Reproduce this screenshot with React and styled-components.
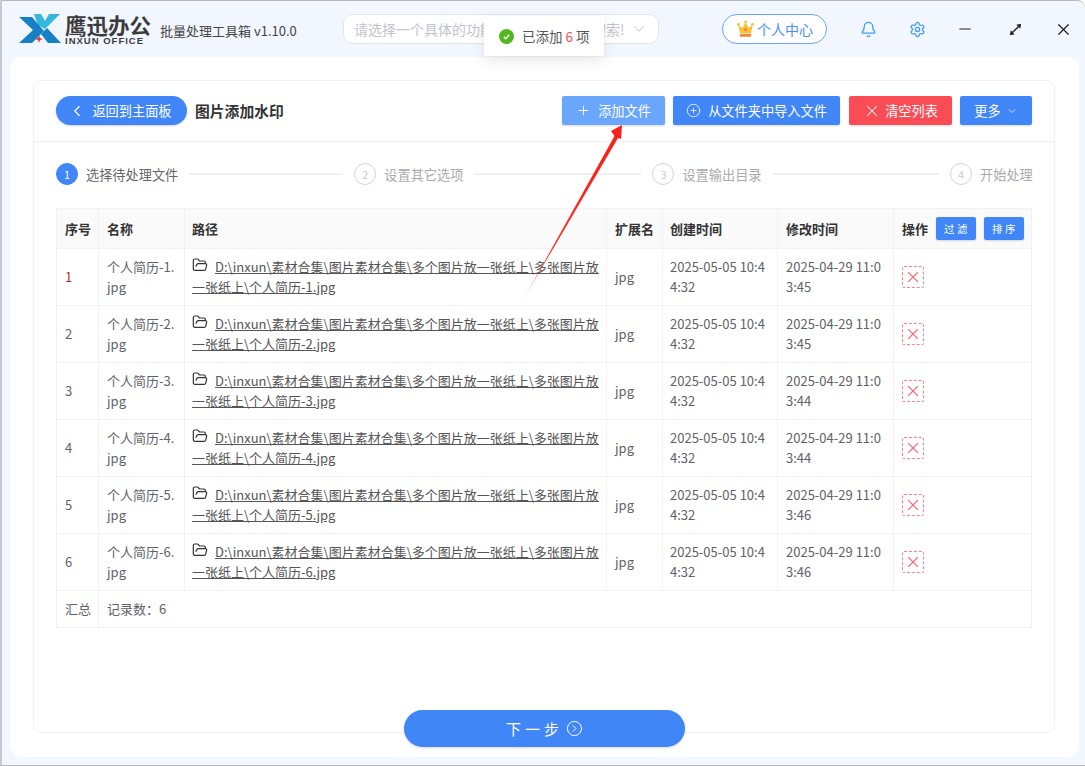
import React from 'react'
import styled, { createGlobalStyle } from 'styled-components'
import { Bell, Settings, Minus, X, Plus, ChevronLeft, ChevronDown, CirclePlus, CircleChevronRight, FolderOpen } from 'lucide-react'

const GlobalStyle = createGlobalStyle`
  html, body {
    margin: 0;
    padding: 0;
    background: #fff;
  }
  * { box-sizing: border-box; }
  body {
    font-family: "Noto Sans CJK SC", "Liberation Sans", sans-serif;
    font-size: 13px;
    color: #606266;
  }
`

const AppWindow = styled.div`
  position: relative;
  width: 1085px;
  height: 766px;
  overflow: hidden;
  background: #f2f6fe;
  border-top: 1px solid #b9b9bd;
  border-bottom: 1px solid #b9b9bd;
  border-left: 2px solid #c9c9cd;
  border-top-right-radius: 8px;
  display: flex;
  flex-direction: column;
`

const EdgeMark = styled.div`
  position: absolute;
  left: -2px;
  top: 82px;
  width: 2px;
  height: 38px;
  background: #1c4f9c;
`

const TopBar = styled.header`
  height: 56px;
  flex: none;
  display: flex;
  align-items: center;
  padding-left: 16px;
`

const Brand = styled.div`
  display: flex;
  align-items: center;
  width: 142px;
  flex: none;
`

const BrandText = styled.div`
  margin: 1px 0 0 3px;
  display: flex;
  flex-direction: column;
  color: #3b3b3d;
`

const BrandName = styled.span`
  font-size: 21.5px;
  line-height: 22px;
  font-weight: 700;
  white-space: nowrap;
`

const BrandSub = styled.span`
  font-family: "Liberation Sans", sans-serif;
  font-size: 9.5px;
  line-height: 10px;
  font-weight: 700;
  letter-spacing: 1px;
  white-space: nowrap;
`

const AppTitle = styled.span`
  width: 183px;
  flex: none;
  margin-top: 3px;
  font-size: 13px;
  color: #444;
  white-space: nowrap;
`

const SearchBox = styled.div`
  width: 316px;
  height: 30px;
  flex: none;
  background: #fff;
  border: 1px solid #e2e4e9;
  border-radius: 10px;
  display: flex;
  align-items: center;
  justify-content: space-between;
  padding: 0 10px;
  color: #c0c4cc;
  font-size: 14px;
  white-space: nowrap;
`

const VipButton = styled.button`
  margin-left: 63px;
  width: 105px;
  height: 30px;
  flex: none;
  border: 1px solid #6aa3fb;
  border-radius: 15px;
  background: #fff;
  color: #4d8ef7;
  font: inherit;
  font-size: 14px;
  display: flex;
  align-items: center;
  justify-content: center;
  gap: 2px;
  padding: 0;
`

const WinIcon = styled.span`
  width: 24px;
  height: 24px;
  flex: none;
  margin-left: ${p => p.$gap}px;
  display: flex;
  align-items: center;
  justify-content: center;
  color: ${p => p.$color || '#222'};
`

const Toast = styled.div`
  position: absolute;
  left: 482px;
  top: 15px;
  width: 120px;
  height: 40px;
  background: #fff;
  border-radius: 2px;
  box-shadow: 0 4px 14px rgba(0, 0, 0, 0.1);
  display: flex;
  align-items: center;
  padding-left: 15px;
  gap: 8px;
  font-size: 13.5px;
  color: #555;
  z-index: 5;
`

const ToastCheck = styled.span`
  width: 15px;
  height: 15px;
  border-radius: 50%;
  background: #52b81f;
  display: flex;
  align-items: center;
  justify-content: center;
`

const Count = styled.em`
  font-style: normal;
  color: #f5525c;
`

const Panel = styled.main`
  position: relative;
  flex: none;
  width: 1069px;
  height: 700px;
  margin-left: 8px;
  background: #fff;
  border-radius: 12px;
  padding: 23px 24px 24px 23px;
`

const Card = styled.section`
  height: 653px;
  border: 1px solid #f1f1f3;
  border-radius: 8px;
`

const CardHead = styled.div`
  height: 61px;
  border-bottom: 1px solid #f0f0f2;
  display: flex;
  align-items: center;
  padding: 0 22px 1px;
`

const BackButton = styled.button`
  width: 131px;
  height: 29px;
  border: 0;
  border-radius: 15px;
  background: #4086f7;
  color: #fff;
  font: inherit;
  font-size: 13.2px;
  display: flex;
  align-items: center;
  justify-content: center;
  gap: 6px;
  padding: 0 3px 0 0;
  box-shadow: 0 1px 2px rgba(0, 0, 0, 0.18);
`

const PageTitle = styled.h1`
  margin: 0 auto 0 8px;
  font-size: 14.8px;
  font-weight: 700;
  color: #333;
`

const ToolButton = styled.button`
  height: 29px;
  width: ${p => p.$w}px;
  margin-left: ${p => p.$ml ?? 8}px;
  border: 0;
  border-radius: 2px;
  background: ${p => p.$bg || '#4086f7'};
  color: #fff;
  font: inherit;
  font-size: 13.2px;
  display: flex;
  align-items: center;
  justify-content: center;
  gap: ${p => p.$gap ?? 7}px;
  padding: 0;
  box-shadow: 0 1px 2px rgba(0, 0, 0, 0.15);
`

const Steps = styled.ol`
  list-style: none;
  margin: 21px 0 0;
  padding: 0 22px;
  display: flex;
  align-items: center;
  height: 22px;
  font-size: 13.2px;
`

const Step = styled.li`
  display: flex;
  align-items: center;
  gap: 8px;
  flex: none;
  color: ${p => (p.$active ? '#666' : '#aaa')};
  white-space: nowrap;
`

const StepDot = styled.span`
  width: 22px;
  height: 22px;
  border-radius: 50%;
  font-size: 11px;
  display: flex;
  align-items: center;
  justify-content: center;
  background: ${p => (p.$active ? '#4086f7' : '#fff')};
  color: ${p => (p.$active ? '#fff' : '#ccc')};
  border: 1px solid ${p => (p.$active ? '#4086f7' : '#d4d4d4')};
`

const StepLine = styled.li`
  flex: none;
  width: ${p => p.$w}px;
  height: 2px;
  margin: 0 11px;
  background: #f0f0f2;
`

const FileTable = styled.table`
  margin: 23px 0 0 22px;
  width: 975px;
  table-layout: fixed;
  border-collapse: collapse;
  color: #606266;

  th, td {
    border: 1px solid #f2f2f3;
    padding: 0 7px 0 8px;
    text-align: left;
    vertical-align: middle;
    line-height: 20px;
    word-break: break-all;
  }
  th:nth-child(3), td:nth-child(3), th:nth-child(5), td:nth-child(5) {
    padding-left: 7px;
  }
  thead tr { height: 40px; }
  tbody tr { height: 57px; }
  tfoot tr { height: 37px; }
  th {
    background: #fafafa;
    color: #333;
    font-weight: 700;
  }
`

const HeadActions = styled.div`
  display: flex;
  align-items: center;
`

const MiniButton = styled.button`
  width: 40px;
  height: 23px;
  margin-left: 8px;
  border: 0;
  border-radius: 2px;
  background: #4086f7;
  color: #fff;
  font: inherit;
  font-size: 10.5px;
  font-weight: 400;
  letter-spacing: 2.5px;
  padding: 0 0 0 2px;
  box-shadow: 0 1px 2px rgba(0, 0, 0, 0.15);
`

const RowNum = styled.span`
  color: ${p => (p.$first ? '#a83232' : 'inherit')};
`

const PathLink = styled.span`
  text-decoration: underline;
  color: #555;
`

const FolderIcon = styled(FolderOpen)`
  vertical-align: -1px;
  margin-right: 7px;
  color: #333;
`

const DeleteBox = styled.button`
  width: 22px;
  height: 22px;
  border: 1px dashed #f8808a;
  border-radius: 2px;
  background: #fff;
  color: #f56c78;
  padding: 0;
  display: flex;
  align-items: center;
  justify-content: center;
`

const NextButton = styled.button`
  position: absolute;
  left: 394px;
  bottom: 10px;
  width: 281px;
  height: 37px;
  border: 0;
  border-radius: 19px;
  background: #4086f7;
  color: #fff;
  font: inherit;
  font-size: 15px;
  letter-spacing: 4px;
  display: flex;
  align-items: center;
  justify-content: center;
  gap: 3px;
  padding: 0;
  box-shadow: 0 1px 3px rgba(0, 0, 0, 0.15);
`

const ArrowLayer = styled.svg`
  position: absolute;
  left: -2px;
  top: -1px;
  width: 1085px;
  height: 766px;
  pointer-events: none;
  z-index: 4;
`

const Logo = () => (
  <svg width="44" height="32" viewBox="0 0 44 32">
    <polygon points="16,1 23,1 27,8 31,1 42,1 27,16 20,12" fill="#35b6dc" />
    <polygon points="1,4 14,4 26,18 14,30 1,30 15,17" fill="#1580c6" />
    <polygon points="43,30 30,30 23,21 29,15" fill="#1580c6" />
    <polygon points="21,22 22,25 25,26 22,27 21,30 20,27 17,26 20,25" fill="#e8343c" />
  </svg>
)

const Crown = () => (
  <svg width="19" height="18" viewBox="0 0 18 18">
    <path d="M2 5l3.6 3L9 2.5 12.4 8 16 5l-1.3 8H3.300z" fill="#fbbf3a" />
    <circle cx="2" cy="4.500" r="1.400" fill="#fbbf3a" />
    <circle cx="16" cy="4.500" r="1.400" fill="#fbbf3a" />
    <circle cx="9" cy="2" r="1.400" fill="#fbbf3a" />
    <circle cx="9" cy="9.500" r="1.500" fill="#f08a24" />
    <rect x="3.300" y="13.800" width="11.400" height="3" rx="0.800" fill="#f58a2c" />
  </svg>
)

const ExpandIcon = () => (
  <svg width="13" height="13" viewBox="0 0 15 15">
    <path d="M4 11l7-7" stroke="#222" strokeWidth="1.500" />
    <polygon points="14,1 13,6.500 8.500,2" fill="#222" />
    <polygon points="1,14 2,8.500 6.500,13" fill="#222" />
  </svg>
)

const rows = [
  { id: 1, modified: '2025-04-29 11:03:45' },
  { id: 2, modified: '2025-04-29 11:03:45' },
  { id: 3, modified: '2025-04-29 11:03:44' },
  { id: 4, modified: '2025-04-29 11:03:44' },
  { id: 5, modified: '2025-04-29 11:03:46' },
  { id: 6, modified: '2025-04-29 11:03:46' },
]

const steps = [
  { label: '选择待处理文件' },
  { label: '设置其它选项', line: 154 },
  { label: '设置输出目录', line: 167 },
  { label: '开始处理', line: 166.5 },
]

const App = () => {
  return (
    <>
      <GlobalStyle />
      <AppWindow>
        <EdgeMark />
        <TopBar>
          <Brand>
            <Logo />
            <BrandText>
              <BrandName>鹰迅办公</BrandName>
              <BrandSub>INXUN OFFICE</BrandSub>
            </BrandText>
          </Brand>
          <AppTitle>批量处理工具箱 v1.10.0</AppTitle>
          <SearchBox>
            <span>请选择一个具体的功能，或输入关键词搜索!</span>
            <ChevronDown size={18} strokeWidth={1.2} color="#b8bcc4" />
          </SearchBox>
          <VipButton><Crown />个人中心</VipButton>
          <WinIcon $gap={29} $color="#3f9bf5"><Bell size={17} strokeWidth={1.8} /></WinIcon>
          <WinIcon $gap={25} $color="#3f9bf5"><Settings size={17} strokeWidth={1.8} /></WinIcon>
          <WinIcon $gap={24}><Minus size={18} strokeWidth={1.6} /></WinIcon>
          <WinIcon $gap={26}><ExpandIcon /></WinIcon>
          <WinIcon $gap={24}><X size={19} strokeWidth={1.5} /></WinIcon>
        </TopBar>

        <Toast>
          <ToastCheck>
            <svg width="9" height="9" viewBox="0 0 10 10"><path d="M2 5.200l2.200 2.200L8 3" fill="none" stroke="#fff" strokeWidth="1.500" /></svg>
          </ToastCheck>
          <span>已添加 <Count>6</Count> 项</span>
        </Toast>

        <Panel>
          <Card>
            <CardHead>
              <BackButton><ChevronLeft size={18} strokeWidth={1.5} />返回到主面板</BackButton>
              <PageTitle>图片添加水印</PageTitle>
              <ToolButton $w={103} $bg="#6aa6fb" $gap={7}><Plus size={15} strokeWidth={1.5} />添加文件</ToolButton>
              <ToolButton $w={167}><CirclePlus size={15} strokeWidth={1.3} />从文件夹中导入文件</ToolButton>
              <ToolButton $w={103} $ml={9} $bg="#fa4c55" $gap={4}><X size={18} strokeWidth={1.4} />清空列表</ToolButton>
              <ToolButton $w={72} $gap={5}>更多<ChevronDown size={12} strokeWidth={1.5} /></ToolButton>
            </CardHead>

            <Steps>
              {steps.map((step, i) => (
                <React.Fragment key={step.label}>
                  {step.line && <StepLine $w={step.line} />}
                  <Step $active={i === 0}>
                    <StepDot $active={i === 0}>{i + 1}</StepDot>
                    {step.label}
                  </Step>
                </React.Fragment>
              ))}
            </Steps>

            <FileTable>
              <colgroup>
                <col style={{ width: 42 }} />
                <col style={{ width: 86 }} />
                <col style={{ width: 422 }} />
                <col style={{ width: 56 }} />
                <col style={{ width: 115 }} />
                <col style={{ width: 116 }} />
                <col style={{ width: 138 }} />
              </colgroup>
              <thead>
                <tr>
                  <th>序号</th>
                  <th>名称</th>
                  <th>路径</th>
                  <th>扩展名</th>
                  <th>创建时间</th>
                  <th>修改时间</th>
                  <th>
                    <HeadActions>
                      操作
                      <MiniButton>过滤</MiniButton>
                      <MiniButton>排序</MiniButton>
                    </HeadActions>
                  </th>
                </tr>
              </thead>
              <tbody>
                {rows.map(row => (
                  <tr key={row.id}>
                    <td><RowNum $first={row.id === 1}>{row.id}</RowNum></td>
                    <td>个人简历-{row.id}.<br />jpg</td>
                    <td>
                      <FolderIcon size={16} strokeWidth={1.8} />
                      <PathLink>D:\inxun\素材合集\图片素材合集\多个图片放一张纸上\多张图片放一张纸上\个人简历-{row.id}.jpg</PathLink>
                    </td>
                    <td>jpg</td>
                    <td>2025-05-05 10:44:32</td>
                    <td>{row.modified}</td>
                    <td><DeleteBox aria-label="删除"><X size={18} strokeWidth={1.5} /></DeleteBox></td>
                  </tr>
                ))}
              </tbody>
              <tfoot>
                <tr>
                  <td>汇总</td>
                  <td colSpan={6}>记录数：6</td>
                </tr>
              </tfoot>
            </FileTable>
          </Card>
          <NextButton>下一步<CircleChevronRight size={17} strokeWidth={1.4} /></NextButton>
        </Panel>

        <ArrowLayer viewBox="0 0 1085 766">
          <defs>
            <linearGradient id="arrowFade" x1="523" y1="300" x2="622" y2="125" gradientUnits="userSpaceOnUse">
              <stop offset="0" stopColor="#ff3b30" stopOpacity="0.35" />
              <stop offset="0.3" stopColor="#ff2a20" />
              <stop offset="1" stopColor="#fa1f16" />
            </linearGradient>
          </defs>
          <polygon points="622,125 611,131 614.500,136 523,300 618,138 621,139" fill="url(#arrowFade)" />
        </ArrowLayer>
      </AppWindow>
    </>
  )
}

export default App
